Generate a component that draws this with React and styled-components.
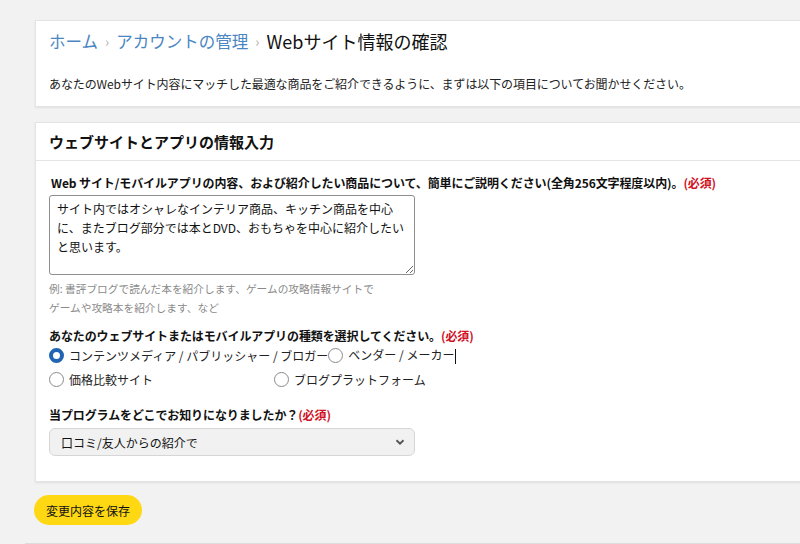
import React from 'react';
import styled, {createGlobalStyle} from 'styled-components';

const GlobalStyle = createGlobalStyle`
  html, body {
    margin: 0;
    padding: 0;
    background: #f2f2f2;
  }
  body {
    font-family: 'Noto Sans CJK JP', 'Noto Sans', sans-serif;
    color: #111;
    overflow: hidden;
  }
`;

const Page = styled.div`
  width: 800px;
  height: 544px;
  overflow: hidden;
  padding: 20px 0 0 35px;
  box-sizing: border-box;
`;

const Card = styled.section`
  background: #fff;
  border: 1px solid #e4e4e4;
  border-right: none;
  box-shadow: 0 1px 2px rgba(0, 0, 0, 0.08);
  margin-right: -10px;
  margin-top: ${props => props.gap || 0}px;
`;

const IntroBody = styled.div`
  padding: 7px 13px 13px;
`;

const Breadcrumb = styled.nav`
  display: flex;
  align-items: center;
  height: 26px;
  line-height: 26px;
`;

const Crumb = styled.span`
  font-size: ${props => (props.current ? 18 : 16.5)}px;
  color: ${props => (props.current ? '#111' : '#4a86c2')};
`;

const Sep = styled.span`
  color: #b0b0b0;
  font-size: 14px;
  margin: 0 7px;
`;

const Intro = styled.p`
  margin: 21px 0 0;
  font-size: 12px;
  line-height: 18px;
  letter-spacing: -0.1px;
  color: #222;
`;

const CardHeader = styled.h2`
  margin: 0;
  padding: 0 13px;
  height: 37px;
  line-height: 37px;
  font-size: 15px;
  font-weight: 700;
  border-bottom: 1px solid #e4e4e4;
`;

const FormBody = styled.div`
  padding: 13px 13px 25px;
`;

const Label = styled.div`
  font-size: 12px;
  line-height: 18px;
  font-weight: 700;
  letter-spacing: -0.1px;
  padding-left: ${props => props.indent || 0}px;
  margin-top: ${props => props.gap || 0}px;
`;

const Required = styled.span`
  color: #d0101e;
`;

const TextArea = styled.textarea`
  display: block;
  box-sizing: border-box;
  width: 366px;
  height: 80px;
  margin-top: 3px;
  padding: 3px 7px;
  border: 1px solid #8f8f8f;
  border-radius: 3px;
  font-family: inherit;
  font-size: 12px;
  line-height: 19px;
  color: #111;
  resize: both;
  outline: none;
`;

const Hint = styled.p`
  margin: 4px 0 0;
  font-size: 10.7px;
  line-height: 19px;
  color: #8a8a8a;
`;

const RadioRow = styled.div`
  display: flex;
  height: 20px;
  margin-top: ${props => props.gap || 0}px;
`;

const RadioItem = styled.label`
  display: flex;
  align-items: center;
  gap: 5px;
  min-width: 225px;
  font-size: 12px;
  color: #222;
  white-space: nowrap;
`;

const RadioDot = styled.span`
  box-sizing: border-box;
  width: 15px;
  height: 15px;
  border-radius: 50%;
  flex-shrink: 0;
  background: #fff;
  border: ${props => (props.checked ? '4px solid #2064b4' : '1px solid #8a8a8a')};
`;

const Caret = styled.span`
  display: inline-block;
  width: 1px;
  height: 15px;
  background: #111;
  margin-left: 1px;
  vertical-align: middle;
`;

const Select = styled.div`
  display: flex;
  align-items: center;
  justify-content: space-between;
  box-sizing: border-box;
  width: 366px;
  height: 28px;
  margin-top: 4px;
  padding: 0 8px 0 11px;
  background: #f1f1f1;
  border: 1px solid #d6d6d6;
  border-radius: 6px;
  font-size: 12px;
  color: #111;
`;

const SaveButton = styled.button`
  display: block;
  margin: 13px 0 0 -1px;
  height: 30px;
  padding: 0 12px;
  border: none;
  border-radius: 15px;
  background: #ffd814;
  font-family: inherit;
  font-size: 12px;
  color: #0f1111;
`;

const Footer = styled.div`
  margin: 18px 0 0 -10px;
  border-top: 2px solid #dcdcdc;
`;

const Chevron = () => (
  <svg width="12" height="12" viewBox="0 0 12 12">
    <path d="M2.5 4.2 L6 7.6 L9.5 4.2" fill="none" stroke="#555" strokeWidth="1.9" />
  </svg>
);

const radioRows = [
  [
    {label: 'コンテンツメディア / パブリッシャー / ブロガー', checked: true},
    {label: 'ベンダー / メーカー', caret: true},
  ],
  [{label: '価格比較サイト'}, {label: 'ブログプラットフォーム'}],
];

export default function App() {
  return (
    <Page>
      <GlobalStyle />
      <Card>
        <IntroBody>
          <Breadcrumb>
            <Crumb>ホーム</Crumb>
            <Sep>›</Sep>
            <Crumb>アカウントの管理</Crumb>
            <Sep>›</Sep>
            <Crumb current>Webサイト情報の確認</Crumb>
          </Breadcrumb>
          <Intro>
            あなたのWebサイト内容にマッチした最適な商品をご紹介できるように、まずは以下の項目についてお聞かせください。
          </Intro>
        </IntroBody>
      </Card>

      <Card gap={15}>
        <CardHeader>ウェブサイトとアプリの情報入力</CardHeader>
        <FormBody>
          <Label indent={2}>
            Web サイト/モバイルアプリの内容、および紹介したい商品について、簡単にご説明ください(全角256文字程度以内)。
            <Required>(必須)</Required>
          </Label>
          <TextArea
            readOnly
            defaultValue="サイト内ではオシャレなインテリア商品、キッチン商品を中心に、またブログ部分では本とDVD、おもちゃを中心に紹介したいと思います。"
          />
          <Hint>
            例: 書評ブログで読んだ本を紹介します、ゲームの攻略情報サイトで
            <br />
            ゲームや攻略本を紹介します、など
          </Hint>

          <Label gap={10}>
            あなたのウェブサイトまたはモバイルアプリの種類を選択してください。
            <Required>(必須)</Required>
          </Label>
          {radioRows.map((row, i) => (
            <RadioRow key={i} gap={i ? 4 : 0}>
              {row.map(item => (
                <RadioItem key={item.label}>
                  <RadioDot checked={item.checked} />
                  <span>
                    {item.label}
                    {item.caret && <Caret />}
                  </span>
                </RadioItem>
              ))}
            </RadioRow>
          ))}

          <Label gap={17}>
            当プログラムをどこでお知りになりましたか？<Required>(必須)</Required>
          </Label>
          <Select>
            <span>口コミ/友人からの紹介で</span>
            <Chevron />
          </Select>
        </FormBody>
      </Card>

      <SaveButton>変更内容を保存</SaveButton>
      <Footer />
    </Page>
  );
}
